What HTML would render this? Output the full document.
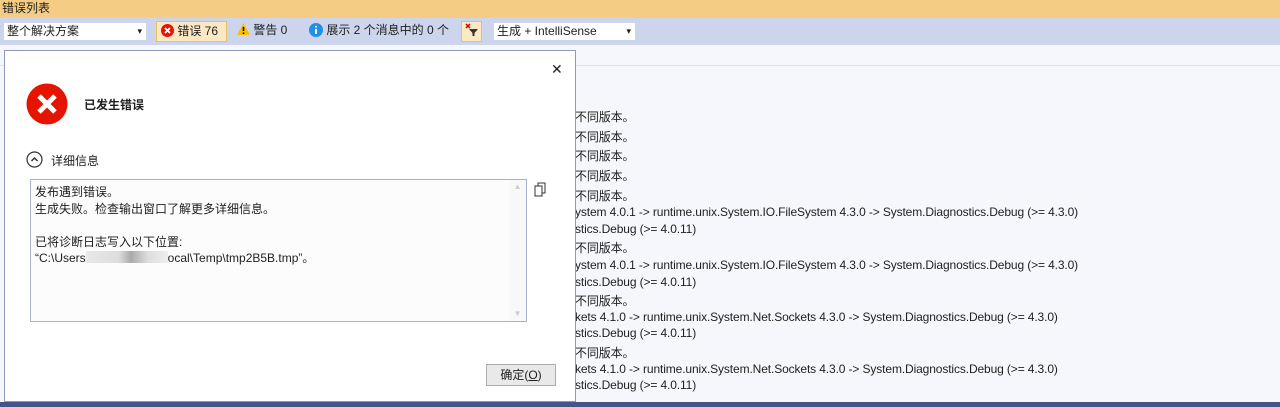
<!DOCTYPE html>
<html><head><meta charset="utf-8"><style>
*{margin:0;padding:0;box-sizing:border-box}
body{width:1280px;height:407px;overflow:hidden;background:#f5f7fc;font-family:"Liberation Sans","Noto Sans CJK SC",sans-serif;font-size:12px;color:#1e1e1e;position:relative}
.abs{position:absolute;white-space:nowrap}
#title{left:0;top:0;width:1280px;height:18px;background:#f5cc84;padding-left:2px;line-height:17px;font-size:12px}
#tb{left:0;top:18px;width:1280px;height:27px;background:#ccd5ec}
.dd{position:absolute;top:4px;height:19px;background:#fff;border:1px solid #ccd5f0;line-height:17px;padding-left:3px}
.dd:after{content:"▾";position:absolute;right:4px;top:0;font-size:9px}
.btn{position:absolute;top:3px;height:21px;line-height:19px;padding-left:4px}
#hdr{left:0;top:45px;width:1280px;height:21px;background:#f5f7fc;border-bottom:1px solid #e0e3ea}
.l{position:absolute;left:575px;white-space:nowrap;font-size:12px;line-height:16px;letter-spacing:-0.12px}
#dlg{left:4px;top:50px;width:572px;height:352px;background:#fff;border:1px solid #8e9bbf}
#bot{left:0;top:402px;width:1280px;height:5px;background:#43568a}
</style></head><body>
<div class="abs" id="title">错误列表</div>
<div class="abs" id="tb">
 <div class="dd" style="left:3px;width:144px">整个解决方案</div>
 <div class="btn" style="left:156px;width:71px;background:#fde8c4;border:1px solid #e5c365">
  <svg width="13" height="13" style="vertical-align:-2px"><circle cx="6.5" cy="6.5" r="6.5" fill="#e51400"/><path d="M4 4L9 9M9 4L4 9" stroke="#fff" stroke-width="1.8"/></svg> 错误 76</div>
 <div class="btn" style="left:233px"><svg width="13" height="12" style="vertical-align:-1px"><path d="M6.5 0L13 12H0Z" fill="#f8c000"/><path d="M6.5 4V8M6.5 9.5V11" stroke="#000" stroke-width="1.5"/></svg> 警告 0</div>
 <div class="btn" style="left:305px"><svg width="14" height="14" style="vertical-align:-3px"><circle cx="7" cy="7" r="7" fill="#1e90e8"/><path d="M7 3V4.5M7 6V11" stroke="#fff" stroke-width="2"/></svg> 展示 2 个消息中的 0 个</div>
 <div class="btn" style="left:461px;width:21px;background:#fde8c4;border:1px solid #e5c365;padding-left:2px"><svg width="15" height="15"><path d="M2 2L6 6M6 2L2 6" stroke="#c00" stroke-width="1.5"/><path d="M5 7H14L10.5 11V14H8.5V11Z" fill="#333"/></svg></div>
 <div class="dd" style="left:493px;width:143px">生成 + IntelliSense</div>
</div>
<div class="abs" id="hdr"></div>
<div class="l" style="top:109px">不同版本。</div>
<div class="l" style="top:129px">不同版本。</div>
<div class="l" style="top:148px">不同版本。</div>
<div class="l" style="top:168px">不同版本。</div>
<div class="l" style="top:188px">不同版本。</div>
<div class="l" style="top:204px">ystem 4.0.1 -&gt; runtime.unix.System.IO.FileSystem 4.3.0 -&gt; System.Diagnostics.Debug (&gt;= 4.3.0)</div>
<div class="l" style="top:221px">stics.Debug (&gt;= 4.0.11)</div>
<div class="l" style="top:240px">不同版本。</div>
<div class="l" style="top:257px">ystem 4.0.1 -&gt; runtime.unix.System.IO.FileSystem 4.3.0 -&gt; System.Diagnostics.Debug (&gt;= 4.3.0)</div>
<div class="l" style="top:274px">stics.Debug (&gt;= 4.0.11)</div>
<div class="l" style="top:293px">不同版本。</div>
<div class="l" style="top:309px">kets 4.1.0 -&gt; runtime.unix.System.Net.Sockets 4.3.0 -&gt; System.Diagnostics.Debug (&gt;= 4.3.0)</div>
<div class="l" style="top:325px">stics.Debug (&gt;= 4.0.11)</div>
<div class="l" style="top:345px">不同版本。</div>
<div class="l" style="top:361px">kets 4.1.0 -&gt; runtime.unix.System.Net.Sockets 4.3.0 -&gt; System.Diagnostics.Debug (&gt;= 4.3.0)</div>
<div class="l" style="top:377px">stics.Debug (&gt;= 4.0.11)</div>
<div class="abs" id="bot"></div>
<div class="abs" id="dlg">
 <div class="abs" style="left:546px;top:10px;font-size:14px">✕</div>
 <svg class="abs" style="left:21px;top:32px" width="42" height="42"><circle cx="21" cy="21" r="20.5" fill="#e51400"/><path d="M13 13L29 29M29 13L13 29" stroke="#fff" stroke-width="5"/></svg>
 <div class="abs" style="left:79px;top:45px;font-size:12px;font-weight:bold">已发生错误</div>
 <svg class="abs" style="left:21px;top:100px" width="17" height="17"><circle cx="8.5" cy="8.5" r="7.5" fill="none" stroke="#333" stroke-width="1.2"/><path d="M5.5 10L8.5 7L11.5 10" fill="none" stroke="#333" stroke-width="1.5"/></svg>
 <div class="abs" style="left:46px;top:101px">详细信息</div>
 <div class="abs" style="left:25px;top:128px;width:497px;height:143px;border:1px solid #a9b3c8;background:#fcfcfc;padding:4px 0 0 4px;line-height:16.5px;white-space:normal">
  发布遇到错误。<br>生成失败。检查输出窗口了解更多详细信息。<br><br>已将诊断日志写入以下位置:<br>“C:\Users<span style="display:inline-block;width:82px;height:12px;background:linear-gradient(90deg,#e8e8e8,#ddd 40%,#aaa 55%,#ddd 75%,#eee);vertical-align:-1px"></span>ocal\Temp\tmp2B5B.tmp”。
  <div class="abs" style="right:0;top:0;width:17px;height:141px;background:#f8f8f8;color:#ccc;font-size:8px;text-align:center;line-height:14px">▲<div style="position:absolute;bottom:0;width:17px">▼</div></div>
 </div>
 <svg class="abs" style="left:529px;top:131px" width="14" height="16"><rect x="1" y="4" width="7" height="10" fill="none" stroke="#333"/><path d="M4 4V1H11V11H8" fill="none" stroke="#333"/></svg>
 <div class="abs" style="left:481px;top:313px;width:70px;height:22px;border:1px solid #adadad;background:#e9e9e9;text-align:center;line-height:20px">确定(<u>O</u>)</div>
</div>
</body></html>
